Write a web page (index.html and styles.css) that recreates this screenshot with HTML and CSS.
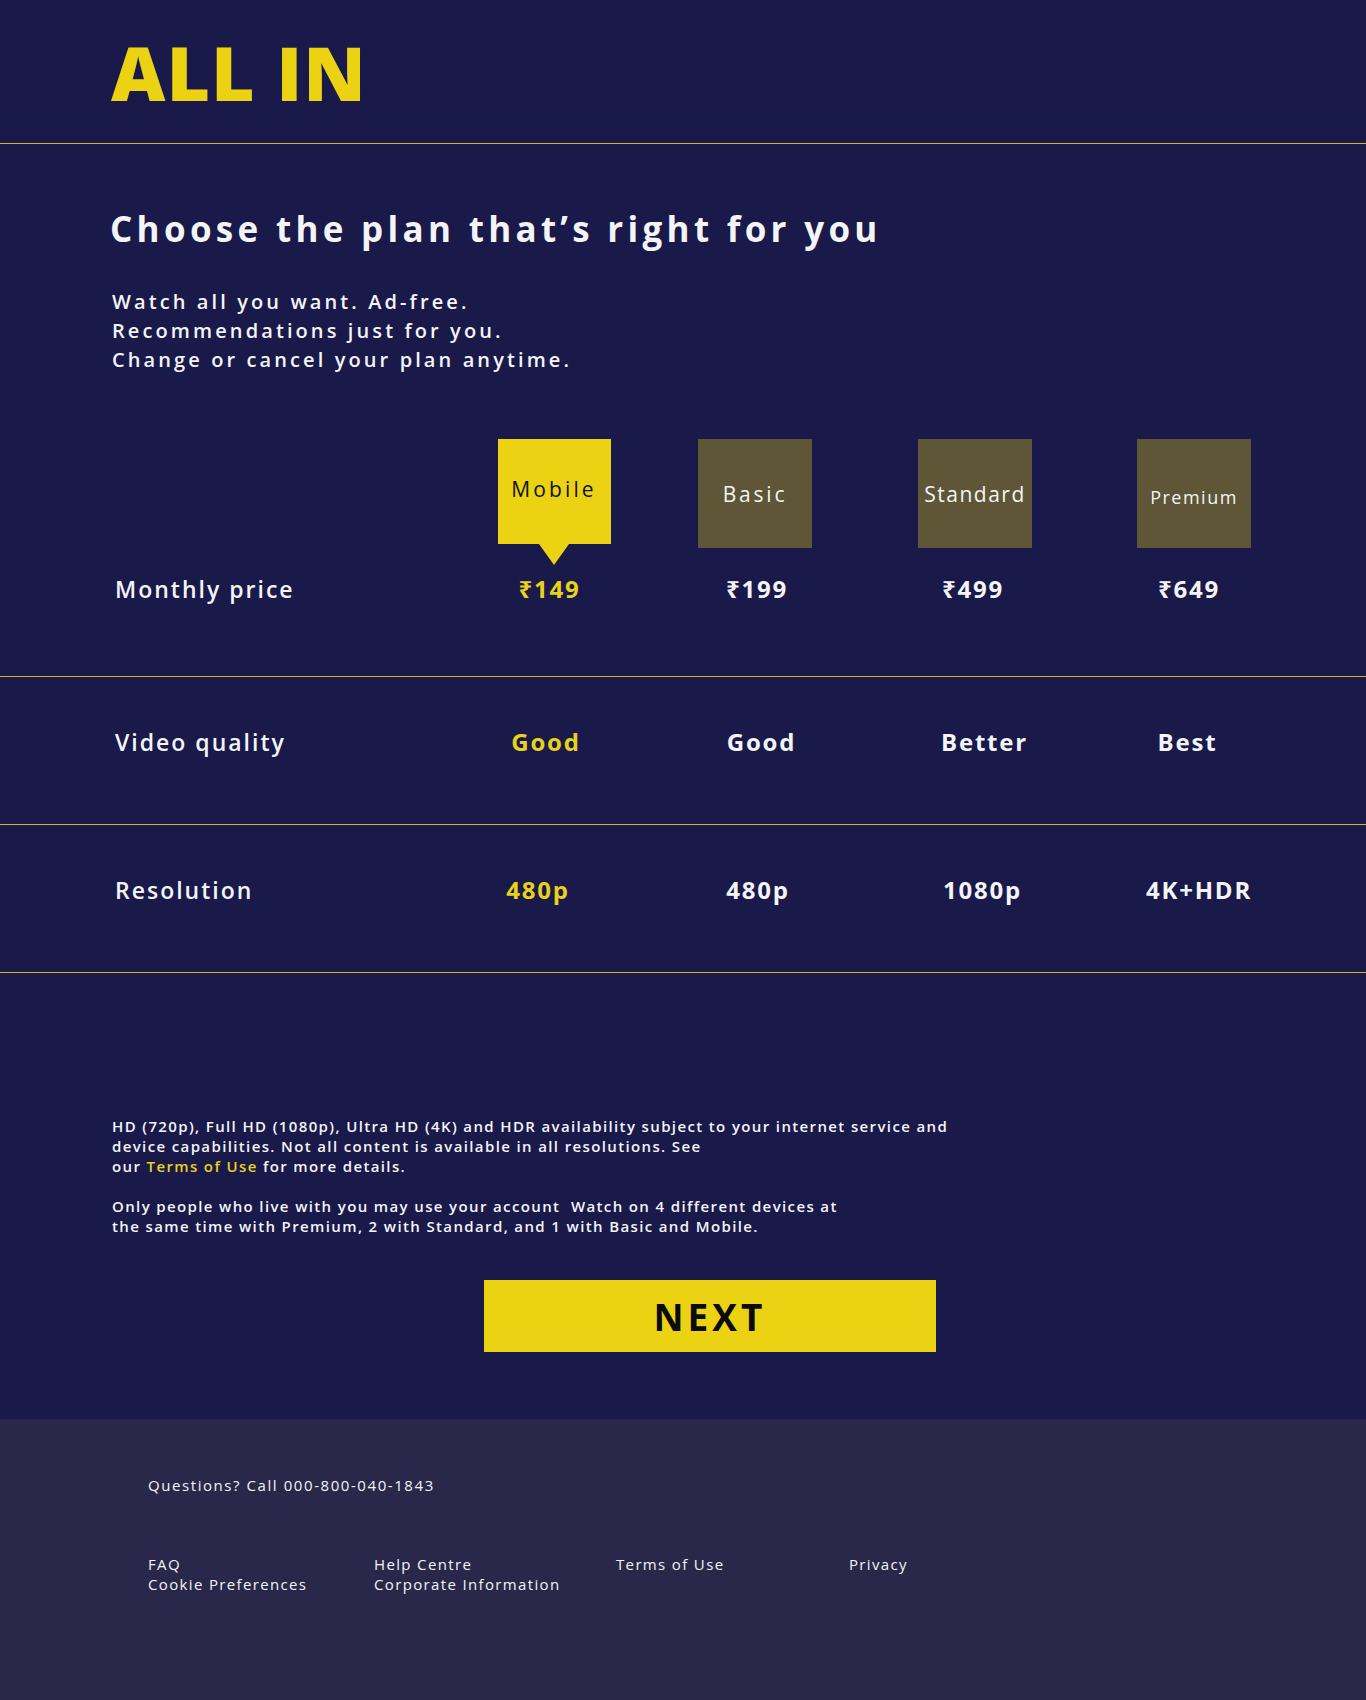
FILE: index.html
```html
<!DOCTYPE html>
<html lang="en">
<head>
<meta charset="utf-8">
<title>ALL IN - Choose your plan</title>
<link rel="stylesheet" href="styles.css">
</head>
<body>
<header class="site-header">
  <div class="logo">ALL IN</div>
</header>

<section class="intro-block">
  <h1 class="title">Choose the plan that’s right for you</h1>
  <p class="intro">Watch all you want. Ad-free.<br>Recommendations just for you.<br>Change or cancel your plan anytime.</p>
</section>

<section class="plans">
  <div class="plan-row plan-row--head">
    <div class="plan-grid plan-grid--boxes">
      <div class="cell-label"></div>
      <div class="cell"><div class="plan-box plan-box--active plan-box--wide">Mobile</div></div>
      <div class="cell"><div class="plan-box plan-box--wide-sm">Basic</div></div>
      <div class="cell"><div class="plan-box">Standard</div></div>
      <div class="cell"><div class="plan-box plan-box--small">Premium</div></div>
    </div>
    <div class="plan-grid plan-grid--prices">
      <div class="cell-label">Monthly price</div>
      <div class="cell value value--active">₹149</div>
      <div class="cell value">₹199</div>
      <div class="cell value">₹499</div>
      <div class="cell value">₹649</div>
    </div>
  </div>

  <div class="plan-row">
    <div class="plan-grid plan-grid--quality">
      <div class="cell-label">Video quality</div>
      <div class="cell value value--active">Good</div>
      <div class="cell value">Good</div>
      <div class="cell value">Better</div>
      <div class="cell value">Best</div>
    </div>
  </div>

  <div class="plan-row">
    <div class="plan-grid plan-grid--resolution">
      <div class="cell-label">Resolution</div>
      <div class="cell value value--active">480p</div>
      <div class="cell value">480p</div>
      <div class="cell value">1080p</div>
      <div class="cell value">4K+HDR</div>
    </div>
  </div>
</section>

<section class="notes">
  <p class="note">HD (720p), Full HD (1080p), Ultra HD (4K) and HDR availability subject to your internet service and<br>device capabilities. Not all content is available in all resolutions. See<br>our <a class="note-link" href="#">Terms of Use</a> for more details.</p>
  <p class="note">Only people who live with you may use your account&nbsp; Watch on 4 different devices at<br>the same time with Premium, 2 with Standard, and 1 with Basic and Mobile.</p>
</section>

<div class="actions">
  <button class="next-btn" type="button">NEXT</button>
</div>

<footer class="site-footer">
  <p class="questions">Questions? Call 000-800-040-1843</p>
  <div class="footer-links">
    <ul class="footer-col"><li>FAQ</li><li>Cookie Preferences</li></ul>
    <ul class="footer-col"><li>Help Centre</li><li>Corporate Information</li></ul>
    <ul class="footer-col"><li>Terms of Use</li></ul>
    <ul class="footer-col"><li>Privacy</li></ul>
  </div>
</footer>
</body>
</html>
```

FILE: styles.css
```css
* { box-sizing: border-box; }

html, body {
  margin: 0;
  padding: 0;
}

body {
  width: 1366px;
  min-height: 1700px;
  background: #19194a;
  color: #f4f4f6;
  font-family: "Open Sans", "Noto Sans", "DejaVu Sans", sans-serif;
  display: flex;
  flex-direction: column;
}

.site-header {
  height: 144px;
  border-bottom: 1px solid #cdb83a;
  padding: 35px 0 0 111px;
}

.logo {
  font-size: 75px;
  line-height: 75px;
  font-weight: 800;
  color: #ebd314;
  letter-spacing: 1px;
}

.intro-block {
  padding: 0 0 0 110px;
}

.title {
  margin: 64px 0 0;
  font-size: 35px;
  line-height: 42px;
  font-weight: 700;
  letter-spacing: 4.3px;
  color: #f4f4f6;
}

.intro {
  margin: 37px 0 0 2px;
  font-size: 20px;
  line-height: 29px;
  font-weight: 600;
  letter-spacing: 3.1px;
}

.plans {
  margin-top: 65px;
}

.plan-row {
  border-bottom: 1px solid #cdb83a;
  padding: 50px 0 67px;
}

.plan-row--head {
  padding: 0 0 72px;
}

.plan-grid {
  display: grid;
  padding-left: 115px;
  align-items: center;
}

.plan-grid--boxes {
  grid-template-columns: 338.5px 201px 201px 239px 199px;
  align-items: start;
}

.plan-grid--prices {
  grid-template-columns: 330.75px 207.5px 207.5px 224.5px 207.5px;
  margin-top: 26px;
}

.plan-grid--quality {
  grid-template-columns: 323.25px 215.5px 215.5px 230.5px 175.5px;
}

.plan-grid--resolution {
  grid-template-columns: 313px 220px 220px 229px 204px;
}

.cell-label {
  font-size: 23px;
  line-height: 30px;
  font-weight: 600;
  letter-spacing: 2px;
}

.cell {
  display: flex;
  justify-content: center;
}

.plan-box {
  width: 114px;
  height: 109px;
  background: #5e5637;
  color: #f4f4f6;
  display: flex;
  align-items: center;
  justify-content: center;
  font-size: 21px;
  font-weight: 500;
  letter-spacing: 1.5px;
  position: relative;
}

.plan-box--wide {
  letter-spacing: 3.1px;
}

.plan-box--wide-sm {
  letter-spacing: 2.8px;
}

.plan-box--active {
  width: 113px;
  height: 105px;
  background: #ebd314;
  color: #111;
  font-weight: 400;
  padding-bottom: 6px;
}

.plan-box--active::after {
  content: "";
  position: absolute;
  left: 50%;
  top: 100%;
  margin-left: -15px;
  border-left: 15px solid transparent;
  border-right: 15px solid transparent;
  border-top: 21px solid #ebd314;
}

.plan-box--small {
  font-size: 18px;
  padding-top: 6px;
}

.value {
  font-size: 24px;
  line-height: 30px;
  font-weight: 700;
  letter-spacing: 1.8px;
  color: #f4f4f6;
}

.value--active {
  color: #e9d21a;
}

.notes {
  margin-top: 143px;
  padding-left: 112px;
}

.note {
  margin: 0 0 20px;
  font-size: 15px;
  line-height: 20px;
  font-weight: 600;
  letter-spacing: 1.37px;
}

.note-link {
  color: #e9d21a;
  text-decoration: none;
}

.actions {
  margin-top: 24px;
  padding-left: 484px;
}

.next-btn {
  width: 452px;
  height: 72px;
  border: 0;
  background: #ebd314;
  color: #0b0b0b;
  font-family: "Open Sans", "Noto Sans", sans-serif;
  font-size: 37px;
  font-weight: 700;
  letter-spacing: 4px;
  padding: 0;
  display: block;
}

.site-footer {
  margin-top: 67px;
  flex: 1;
  background: #29284a;
  padding: 56px 0 40px 148px;
}

.questions {
  margin: 0;
  font-size: 15px;
  line-height: 20px;
  letter-spacing: 1.57px;
}

.footer-links {
  margin-top: 59px;
  display: grid;
  grid-template-columns: 226px 242px 233px auto;
}

.footer-col {
  list-style: none;
  margin: 0;
  padding: 0;
  font-size: 15px;
  line-height: 20px;
  letter-spacing: 1.35px;
}
```
